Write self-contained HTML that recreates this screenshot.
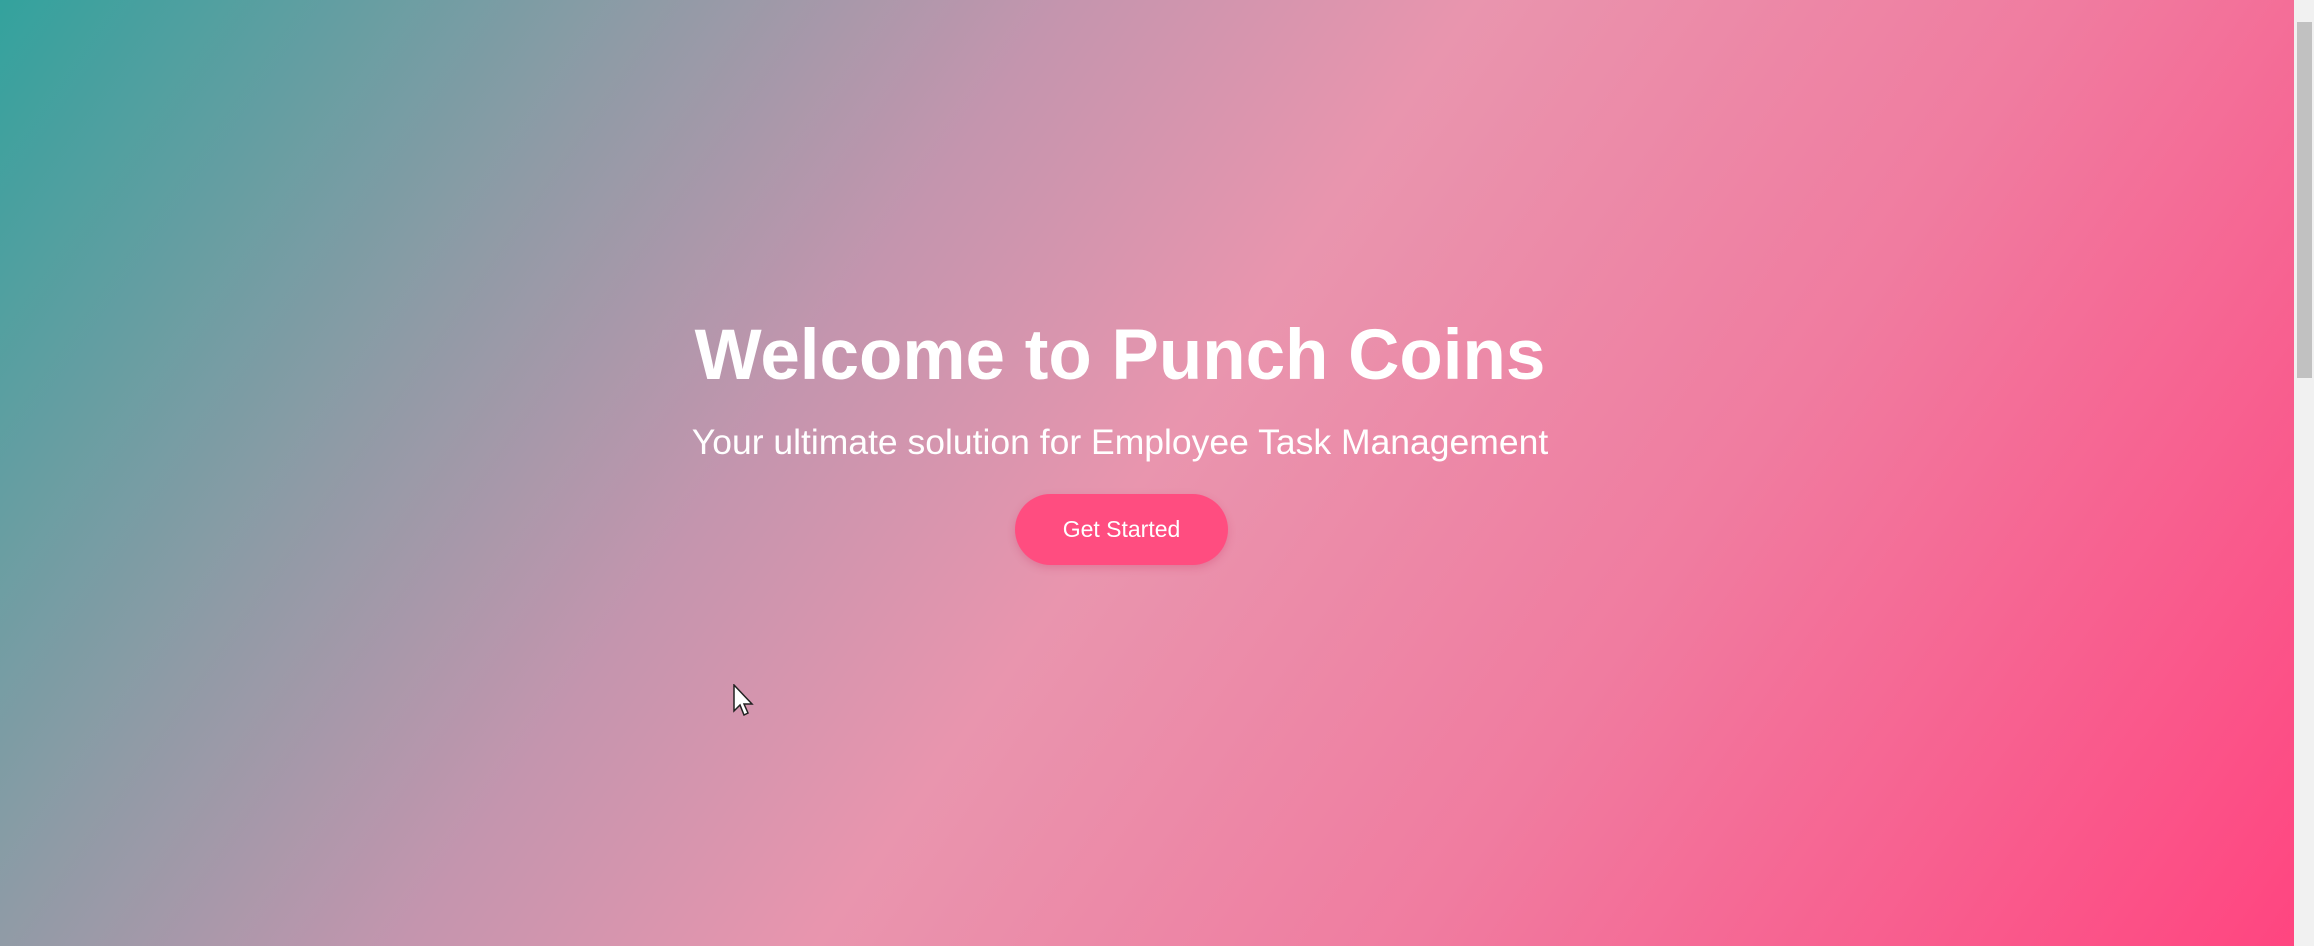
<!DOCTYPE html>
<html><head><meta charset="utf-8"><style>
html,body{margin:0;padding:0;width:2314px;height:946px;overflow:hidden;}
body{position:relative;font-family:"Liberation Sans",Arial,sans-serif;}
.bg{position:absolute;left:0;top:0;width:2294px;height:946px;
background:linear-gradient(125deg,#33a29d 0%,#8f9ba6 22%,#c495ae 36%,#e995ae 50%,#f07ca0 70%,#ff4580 100%);}
.sb{position:absolute;left:2294px;top:0;width:20px;height:946px;background:#f1f1f1;}
.thumb{position:absolute;left:2297px;top:22px;width:15px;height:356px;background:#c1c1c1;}
h1{position:absolute;left:0;width:2240px;top:312px;margin:0;text-align:center;color:#fff;font-size:71px;font-weight:bold;line-height:88px;}
p{position:absolute;left:0;width:2240px;top:420px;margin:0;text-align:center;color:#fff;font-size:35.5px;line-height:44px;}
.btn{position:absolute;left:1015px;top:494px;width:213px;height:71px;border-radius:36px;background:#ff4d80;color:#fff;font-size:23px;line-height:71px;text-align:center;box-shadow:0 3px 8px rgba(200,40,90,.25);}
.cur{position:absolute;left:733px;top:684px;}
</style></head><body>
<div class="bg"></div>
<div class="sb"></div><div class="thumb"></div>
<h1>Welcome to Punch Coins</h1>
<p>Your ultimate solution for Employee Task Management</p>
<div class="btn">Get Started</div>
<svg class="cur" width="24" height="36" viewBox="0 0 24 36"><path d="M1 1 L1 27 L7 21 L11 31 L15 29 L11 20 L19 20 Z" fill="#fff" stroke="#222" stroke-width="1.5"/></svg>
</body></html>
